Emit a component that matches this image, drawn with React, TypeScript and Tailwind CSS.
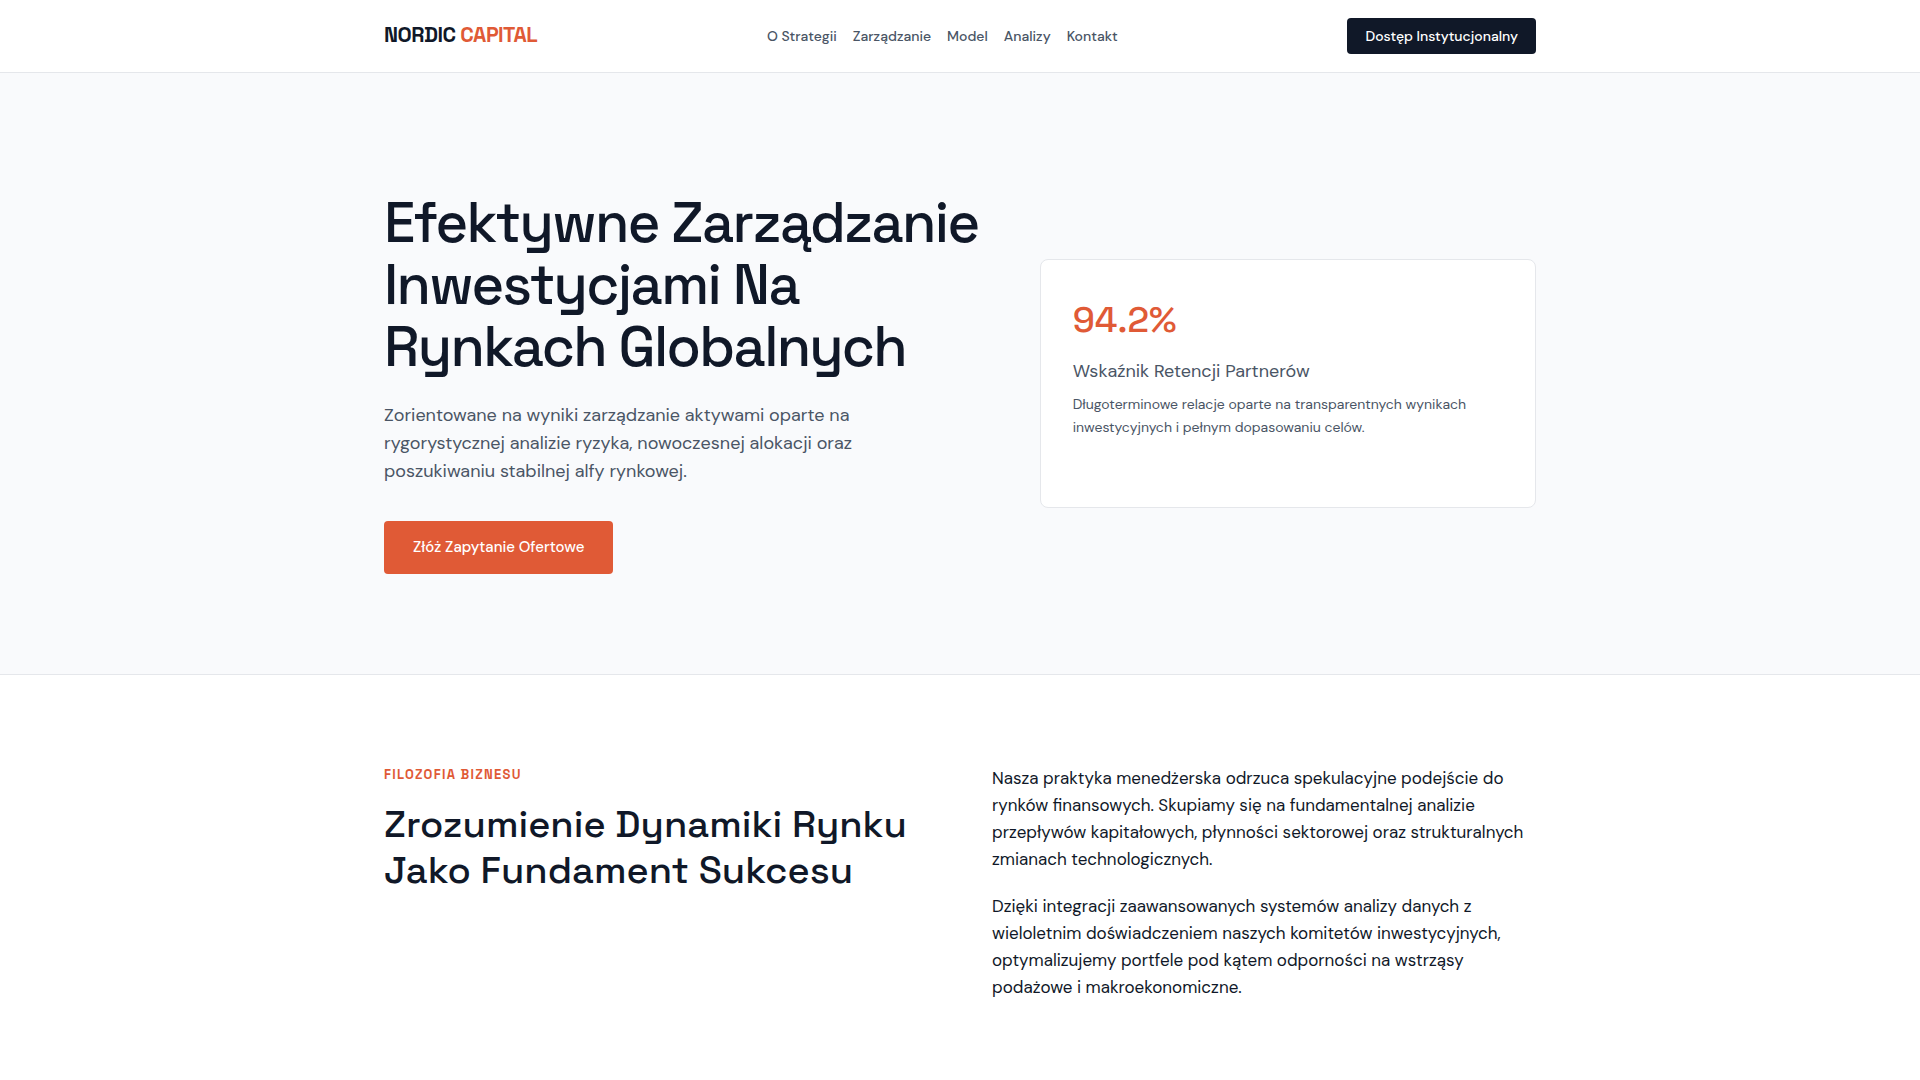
const navItems = [
  { label: 'O Strategii', href: '#strategia' },
  { label: 'Zarządzanie', href: '#zarzadzanie' },
  { label: 'Model', href: '#model' },
  { label: 'Analizy', href: '#analizy' },
  { label: 'Kontakt', href: '#kontakt' },
];

function Header() {
  return (
    <header className="border-b border-gray-200 bg-white">
      <div className="mx-auto flex max-w-[1200px] items-center justify-between px-6 py-[18px]">
        <a
          href="#"
          className="self-start font-['Space_Grotesk','Inter',sans-serif] text-[21px] leading-[34px] font-bold tracking-tight text-gray-900"
        >
          NORDIC <span className="text-[#e05a36]">CAPITAL</span>
        </a>
        <nav className="flex gap-4">
          {navItems.map((item) => (
            <a key={item.href} href={item.href} className="text-sm font-medium text-gray-600">
              {item.label}
            </a>
          ))}
        </nav>
        <button type="button" className="h-9 rounded bg-gray-900 px-[18px] text-sm font-medium text-white">
          Dostęp Instytucjonalny
        </button>
      </div>
    </header>
  );
}

function Hero() {
  return (
    <section className="border-b border-gray-200 bg-[#f9fafc]">
      <div className="mx-auto grid max-w-[1200px] grid-cols-[6fr_5fr] items-center gap-[60px] px-6 pt-[119px] pb-[100px]">
        <div>
          <h1 className="font-['Space_Grotesk','Inter',sans-serif] text-[56px] leading-[62px] font-medium tracking-[-0.03em] text-gray-900">
            Efektywne Zarządzanie Inwestycjami Na Rynkach Globalnych
          </h1>
          <p className="mt-[23px] max-w-[480px] text-lg leading-7 text-gray-600">
            Zorientowane na wyniki zarządzanie aktywami oparte na rygorystycznej analizie ryzyka, nowoczesnej alokacji
            oraz poszukiwaniu stabilnej alfy rynkowej.
          </p>
          <button
            type="button"
            className="mt-9 block h-[53px] rounded bg-[#e05a36] px-[29px] text-[15px] font-medium text-white"
          >
            Złóż Zapytanie Ofertowe
          </button>
        </div>
        <div className="min-h-[249px] rounded-lg border border-gray-200 bg-white p-8">
          <div className="font-['Space_Grotesk','Inter',sans-serif] text-4xl leading-[57px] font-medium text-[#e05a36]">
            94.2%
          </div>
          <div className="mt-2 text-lg leading-7 text-gray-600">Wskaźnik Retencji Partnerów</div>
          <p className="mt-2 text-sm leading-[23px] text-gray-600">
            Długoterminowe relacje oparte na transparentnych wynikach inwestycyjnych i pełnym dopasowaniu celów.
          </p>
        </div>
      </div>
    </section>
  );
}

function Philosophy() {
  return (
    <section className="bg-white">
      <div className="mx-auto grid max-w-[1200px] grid-cols-2 gap-16 px-6 py-[90px]">
        <div>
          <div className="font-['Space_Grotesk','Inter',sans-serif] text-[13px] leading-5 font-semibold tracking-widest text-[#e05a36] uppercase">
            Filozofia Biznesu
          </div>
          <h2 className="mt-4 font-['Space_Grotesk','Inter',sans-serif] text-[38px] leading-[46px] font-medium text-gray-900">
            Zrozumienie Dynamiki Rynku Jako Fundament Sukcesu
          </h2>
        </div>
        <div className="space-y-5 text-[17px] leading-[27px] text-gray-900">
          <p>
            Nasza praktyka menedżerska odrzuca spekulacyjne podejście do rynków finansowych. Skupiamy się na
            fundamentalnej analizie przepływów kapitałowych, płynności sektorowej oraz strukturalnych zmianach
            technologicznych.
          </p>
          <p>
            Dzięki integracji zaawansowanych systemów analizy danych z wieloletnim doświadczeniem naszych komitetów
            inwestycyjnych, optymalizujemy portfele pod kątem odporności na wstrząsy podażowe i makroekonomiczne.
          </p>
        </div>
      </div>
    </section>
  );
}

export default function App() {
  return (
    <main className="min-h-screen bg-white font-['DM_Sans','Inter',sans-serif]">
      <Header />
      <Hero />
      <Philosophy />
    </main>
  );
}
